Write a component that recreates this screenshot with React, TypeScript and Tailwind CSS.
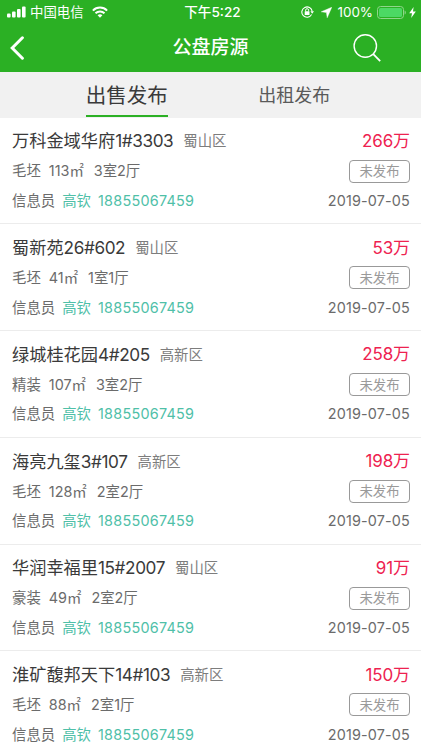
const TABS = ["出售发布", "出租发布"]

const LISTINGS = [
    { estate: "万科金域华府", unit: "1#3303", district: "蜀山区", price: "266万", finish: "毛坯", area: "113㎡", rooms: "3室2厅" },
    { estate: "蜀新苑", unit: "26#602", district: "蜀山区", price: "53万", finish: "毛坯", area: "41㎡", rooms: "1室1厅" },
    { estate: "绿城桂花园", unit: "4#205", district: "高新区", price: "258万", finish: "精装", area: "107㎡", rooms: "3室2厅" },
    { estate: "海亮九玺", unit: "3#107", district: "高新区", price: "198万", finish: "毛坯", area: "128㎡", rooms: "2室2厅" },
    { estate: "华润幸福里", unit: "15#2007", district: "蜀山区", price: "91万", finish: "豪装", area: "49㎡", rooms: "2室2厅" },
    { estate: "淮矿馥邦天下", unit: "14#103", district: "高新区", price: "150万", finish: "毛坯", area: "88㎡", rooms: "2室1厅" }
]

function StatusBar() {
    return (
        <div className="flex h-6 items-center text-[13.4px] leading-none">
            <div className="flex flex-1 items-center pl-[7px]">
                <svg width="19" height="12" viewBox="0 0 19 12" fill="currentColor">
                    <rect x="0" y="7.5" width="3.6" height="4" rx="1" />
                    <rect x="5" y="5.5" width="3.6" height="6" rx="1" />
                    <rect x="10" y="3" width="3.6" height="8.5" rx="1" />
                    <rect x="15" y="0.5" width="3.6" height="11" rx="1" />
                </svg>
                <span className="ml-1 pt-0.5">中国电信</span>
                <svg className="ml-2" width="16" height="12" viewBox="0 0 16 12" fill="none" stroke="currentColor" strokeWidth="2">
                    <path d="M0.9 4.6C4.8 0.6 11.2 0.6 15.1 4.6" />
                    <path d="M3.5 7.3C6 4.9 10 4.9 12.5 7.3" />
                    <path d="M5.6 9.3C7 8 9 8 10.4 9.3L8 11.7Z" fill="currentColor" stroke="none" />
                </svg>
            </div>
            <span className="pt-0.5 pl-0.5 text-[13.6px] font-medium">下午5:22</span>
            <div className="flex flex-1 items-center justify-end pr-[5px]">
                {/* Orientation lock */}
                <svg width="13" height="12" viewBox="0 0 13 12" fill="none" stroke="currentColor">
                    <path d="M10.6 8.6A5.2 5.2 0 1 1 11.2 5.4" strokeWidth="1.1" />
                    <path d="M9.4 5.2H13L11.2 7.8Z" fill="currentColor" stroke="none" />
                    <rect x="3.7" y="5.2" width="4.8" height="3.7" rx="0.5" fill="currentColor" stroke="none" />
                    <path d="M4.6 5.4V4.2A1.5 1.5 0 0 1 7.6 4.2V5.4" strokeWidth="1" />
                </svg>
                <svg className="ml-[7px]" width="11" height="11" viewBox="0 0 11 11" fill="currentColor">
                    <path d="M10.8 0.2L6.2 10.8L5.4 5.6L0.2 4.8Z" stroke="currentColor" strokeWidth="0.4" />
                </svg>
                <span className="ml-[6px] pt-px">100%</span>
                <svg className="ml-1" width="29" height="13" viewBox="0 0 29 13" fill="none">
                    <rect x="0.5" y="0.5" width="26" height="12" rx="3" stroke="#8fd68b" />
                    <rect x="2" y="2" width="23" height="9" rx="1.6" fill="#4cd964" />
                    <path d="M27.6 4.5C29.2 5 29.2 8 27.6 8.5Z" fill="#8fd68b" />
                </svg>
                <svg className="ml-[3px]" width="7" height="11" viewBox="0 0 7 11" fill="currentColor">
                    <path d="M4.6 0L0.2 6.2H3L2.2 11L6.8 4.5H4Z" />
                </svg>
            </div>
        </div>
    )
}

export default function App() {
    return (
        <div className="h-[750px] w-[421px] overflow-hidden bg-white font-['Inter','Noto_Sans_CJK_SC',sans-serif] whitespace-nowrap">
            <header className="h-[72px] bg-[#2bb024] text-white">
                <StatusBar />
                <div className="flex h-12 items-center justify-between pr-10 pl-[10px]">
                    <svg width="31" height="24" viewBox="0 0 31 24" fill="none" stroke="currentColor" strokeWidth="3" strokeLinecap="round">
                        <path d="M12.4 1.8L2.2 12L12.4 22.2" />
                    </svg>
                    <h1 className="pt-px pl-[27px] text-[19px] font-medium">公盘房源</h1>
                    <svg width="28" height="28" viewBox="0 0 28 28" fill="none" stroke="currentColor" strokeWidth="1.4">
                        <circle cx="12.3" cy="12" r="11.2" />
                        <path d="M20.3 20.2L27.2 27.2" strokeWidth="1.8" />
                    </svg>
                </div>
            </header>

            <nav className="flex h-[45.5px] bg-[#f1f1f1]">
                <div className="flex flex-1 justify-center pl-[43px]">
                    <span className="h-[45px] border-b-2 border-[#2bb024] text-[20.5px] leading-[48px] text-[#3a3a3a]">{TABS[0]}</span>
                </div>
                <div className="flex flex-1 justify-center pr-[43px]">
                    <span className="text-[18px] leading-[48px] text-[#5a5a5a]">{TABS[1]}</span>
                </div>
            </nav>

            <ul>
                {LISTINGS.map((item) => (
                    <li key={item.estate} className="h-[106.75px] border-b border-[#ececec] pt-[8.7px] pr-[11px] pl-3 text-[14.4px] text-[#6b6b6b]">
                        <div className="flex h-[30px] items-center">
                            <span className="text-[17.2px] text-[#3a3a3a]">
                                {item.estate}
                                <span className="tracking-[-0.4px]">{item.unit}</span>
                            </span>
                            <span className="ml-[10px] text-[#7d7d7d]">{item.district}</span>
                            <span className="ml-auto pt-px text-[17px] tracking-[-0.1px] text-[#ee2250]">{item.price}</span>
                        </div>
                        <div className="flex h-[30px] items-center">
                            <span>{item.finish}</span>
                            <span className="ml-2">{item.area}</span>
                            <span className="ml-[10px]">{item.rooms}</span>
                            <span className="ml-auto flex h-[23px] w-[61px] items-center justify-center rounded-[4px] border border-[#999] text-[13.4px] text-[#9a9a9a]">
                                未发布
                            </span>
                        </div>
                        <div className="flex h-[29px] items-center">
                            <span>信息员</span>
                            <span className="ml-[7px] text-[#4fc0a8]">高钦</span>
                            <span className="ml-[7px] tracking-[0.25px] text-[#4fc0a8]">18855067459</span>
                            <span className="ml-auto tracking-[0.15px]">2019-07-05</span>
                        </div>
                    </li>
                ))}
            </ul>
        </div>
    )
}
